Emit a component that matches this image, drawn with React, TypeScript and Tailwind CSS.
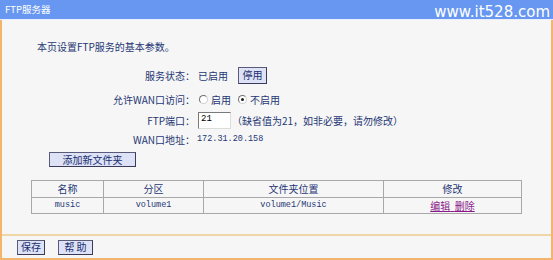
import React from "react";

const cjk = { fontFamily: '"Noto Sans CJK SC", "Noto Sans", sans-serif' };
const mono = { fontFamily: '"Liberation Mono", "Noto Sans CJK SC", monospace' };

function Btn({ children, className = "" }: { children: React.ReactNode; className?: string }) {
  return (
    <button
      className={`flex items-center justify-center border border-[#5a5a7a] border-b-[#3a3a5a] border-r-[#3a3a5a] bg-[#dde2f6] text-[10px] leading-none text-[#1a2f6e] ${className}`}
      style={cjk}
    >
      {children}
    </button>
  );
}

function Radio({ checked }: { checked?: boolean }) {
  return (
    <span className="relative inline-block h-[9px] w-[9px] rounded-full border border-[#707070] border-r-[#d0d0d0] border-b-[#d0d0d0] bg-white">
      {checked && <span className="absolute left-[2px] top-[2px] h-[3px] w-[3px] rounded-full bg-[#202020]" />}
    </span>
  );
}

export default function App() {
  const label = "w-[194px] shrink-0 text-right pr-[1px]";
  return (
    <div className="relative h-[260px] w-[553px] overflow-hidden bg-white text-[10px] text-[#1f3775]" style={cjk}>
      <div className="flex h-[19px] items-center bg-[#6797f0] pl-[5px] text-[9.5px] text-white">FTP服务器</div>
      <div className="h-[1px] bg-[#e8eefc]" />
      <div className="flex h-[240px] flex-col border-x-2 border-b-2 border-x-[#f3b56e] border-b-[#f3b56e] bg-[#f6f6f6]">
        <div className="flex flex-1 flex-col">
          <div className="mt-[21px] pl-[35px] leading-[12px]">本页设置FTP服务的基本参数。</div>
          <div className="mt-[13px] flex h-[18px] items-center">
            <div className={label}>服务状态：</div>
            <div className="ml-[2px] w-[40px]">已启用</div>
            <Btn className="h-[17px] w-[29px]">停用</Btn>
          </div>
          <div className="mt-[6px] flex h-[18px] items-center">
            <div className={label}>允许WAN口访问：</div>
            <div className="ml-[3px] flex items-center gap-[3px]">
              <Radio />
              <span>启用</span>
              <span className="w-[1px]" />
              <Radio checked />
              <span>不启用</span>
            </div>
          </div>
          <div className="mt-[2px] flex h-[20px] items-center">
            <div className={label}>FTP端口：</div>
            <div className="ml-[2px] flex h-[17px] w-[33px] items-center border border-[#7a7a7a] border-b-[#dcdcdc] border-r-[#dcdcdc] bg-white pl-[2px] text-[9px] text-black" style={mono}>
              21
            </div>
            <div className="ml-[1px]">（缺省值为21，如非必要，请勿修改）</div>
          </div>
          <div className="mt-0 flex h-[18px] items-center">
            <div className={label}>WAN口地址：</div>
            <div className="ml-[1px] text-[8.5px]" style={mono}>172.31.20.158</div>
          </div>
          <div className="mt-[4px] pl-[47px]">
            <Btn className="h-[15px] w-[87px] bg-[#ccd3f4]">添加新文件夹</Btn>
          </div>
          <div className="mt-[13px] pl-[29px]">
            <table className="w-[491px] border-collapse border border-[#8a8a8a] text-center">
              <tbody>
                <tr className="h-[17px]">
                  <td className="w-[72px] border border-[#a8a8a8] leading-none">名称</td>
                  <td className="w-[100px] border border-[#a8a8a8] leading-none">分区</td>
                  <td className="w-[180px] border border-[#a8a8a8] leading-none">文件夹位置</td>
                  <td className="border border-[#a8a8a8] leading-none">修改</td>
                </tr>
                <tr className="h-[16px] text-[8.5px]" style={mono}>
                  <td className="border border-[#a8a8a8] leading-none">music</td>
                  <td className="border border-[#a8a8a8] leading-none">volume1</td>
                  <td className="border border-[#a8a8a8] leading-none">volume1/Music</td>
                  <td className="border border-[#a8a8a8] text-[10px] leading-none text-[#8a1a8a]" style={cjk}>
                    <span className="underline">编辑</span>
                    <span className="underline">&nbsp;&nbsp;</span>
                    <span className="underline">删除</span>
                  </td>
                </tr>
              </tbody>
            </table>
          </div>
        </div>
        <div className="h-[2px] bg-[#f0d6a6]" />
        <div className="flex h-[22px] items-center gap-[13px] pl-[15px]">
          <Btn className="h-[15px] w-[28px]">保存</Btn>
          <Btn className="h-[15px] w-[35px]">帮&nbsp;助</Btn>
        </div>
      </div>
      <div className="absolute right-[3px] top-[4px] text-[15px] leading-[16px] text-white" style={{ fontFamily: '"DejaVu Sans", Verdana, sans-serif' }}>
        www.it528.com
      </div>
    </div>
  );
}
